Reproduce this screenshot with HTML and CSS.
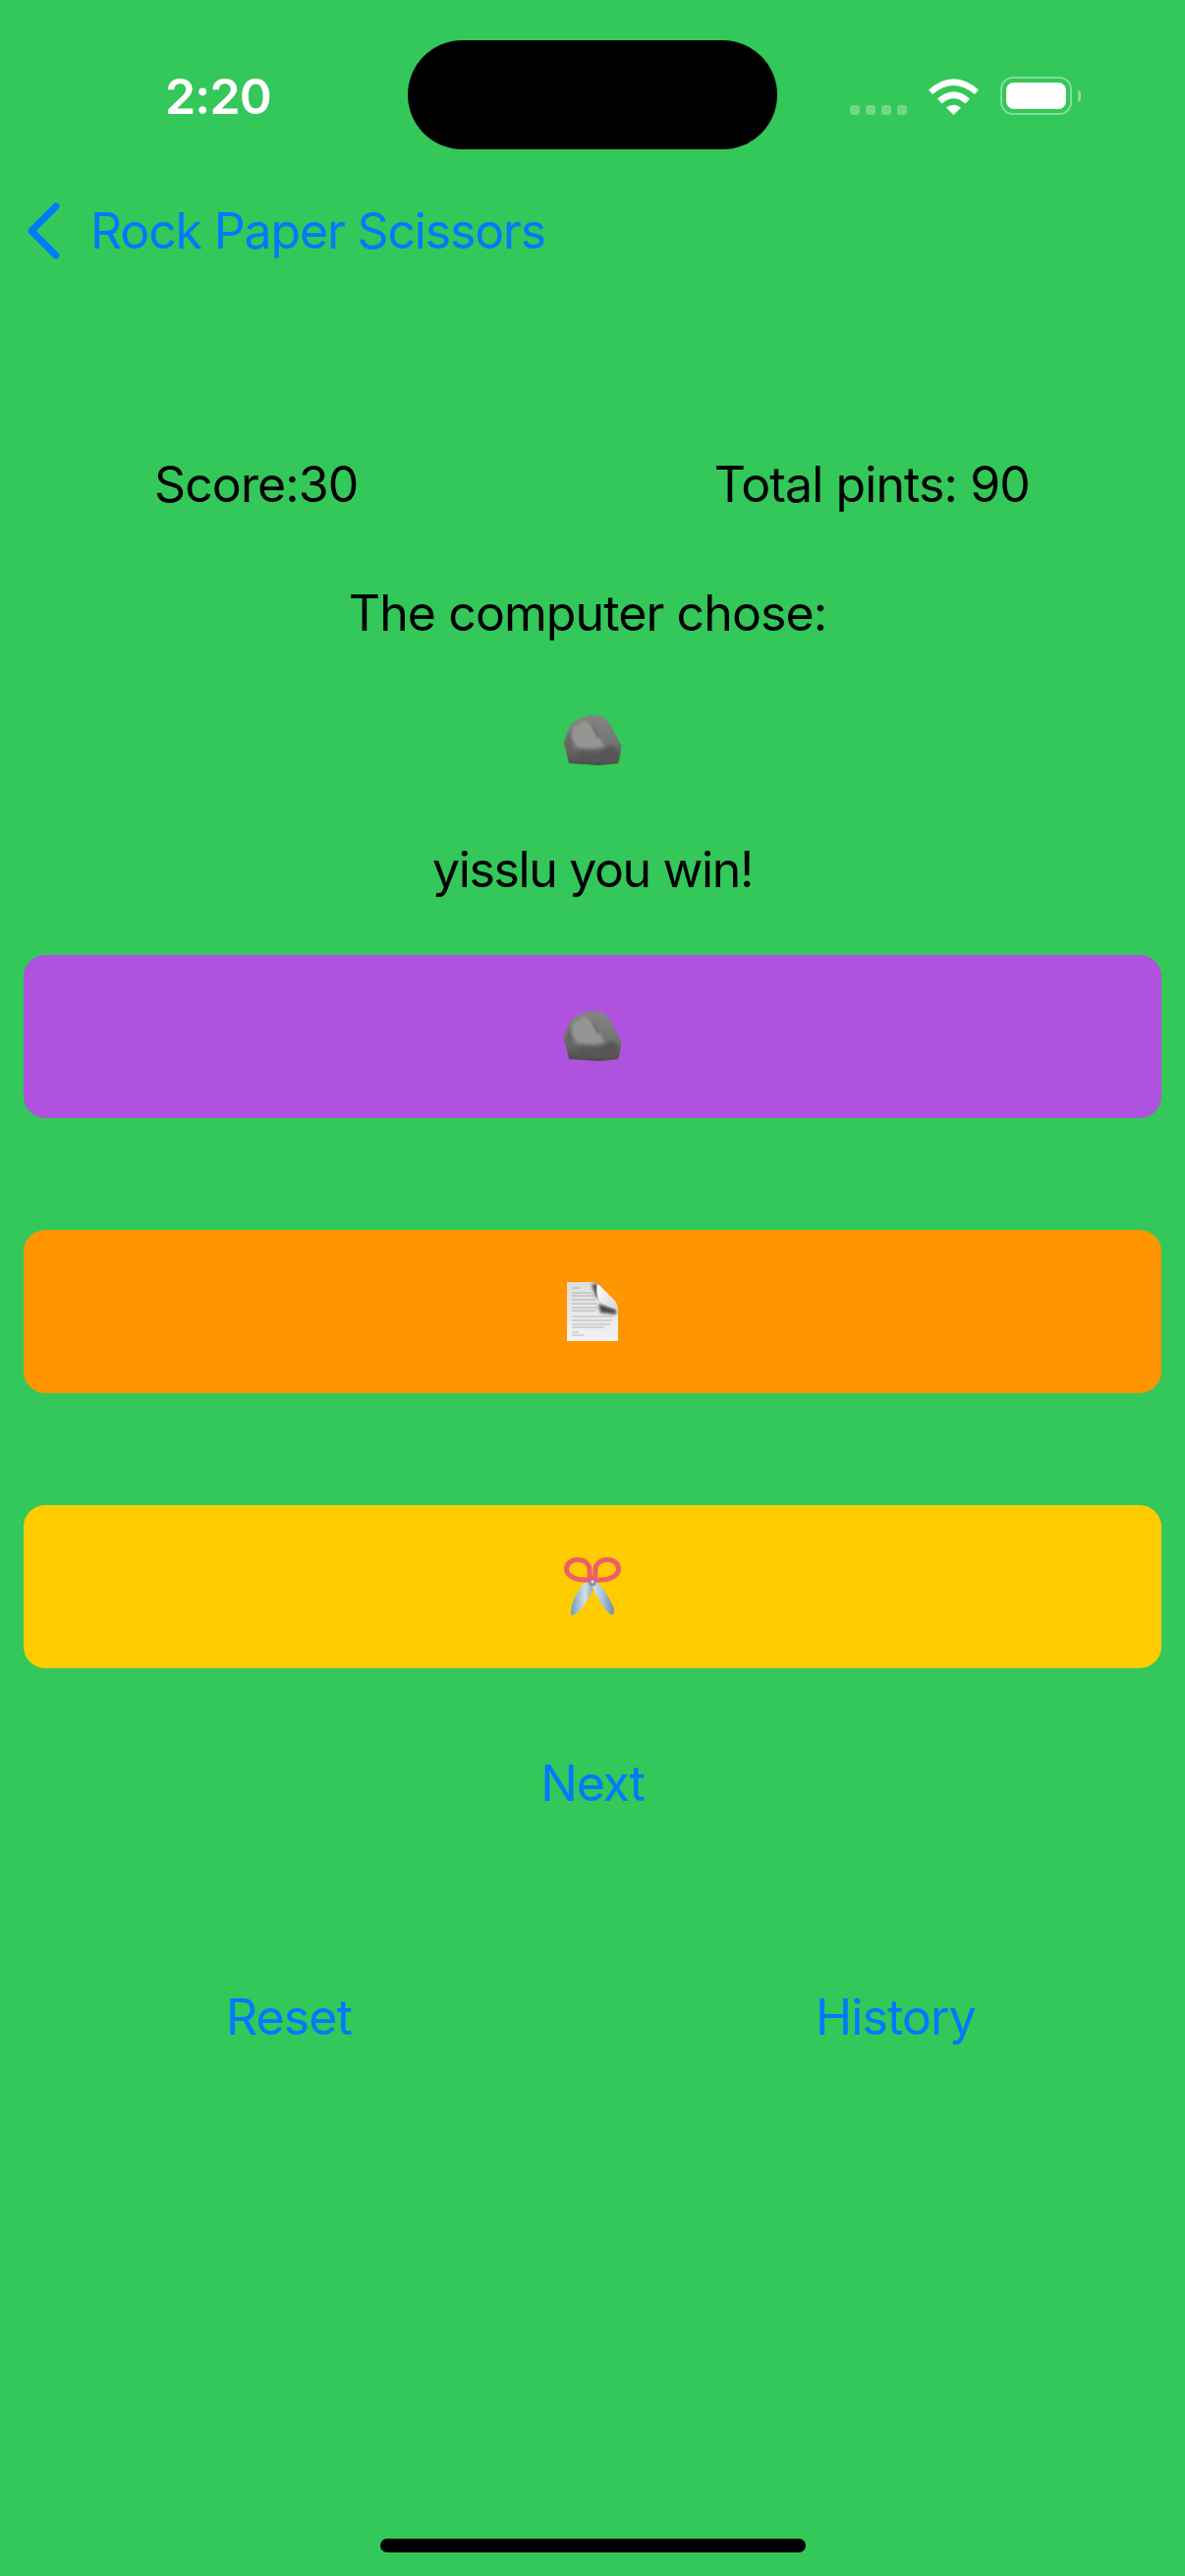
FILE: index.html
```html
<!DOCTYPE html>
<html lang="en">
<head>
    <meta charset="UTF-8">
    <meta name="viewport" content="width=device-width, initial-scale=1.0">
    <title>Rock Paper Scissors</title>
    <link rel="stylesheet" href="styles.css">
</head>
<body>
    <svg class="defs" width="0" height="0" aria-hidden="true">
        <defs>
            <filter id="soft" x="-20%" y="-20%" width="140%" height="140%">
                <feGaussianBlur stdDeviation="1.500"/>
            </filter>
            <filter id="tiny" x="-5%" y="-5%" width="110%" height="110%">
                <feGaussianBlur stdDeviation="0.600"/>
            </filter>
            <linearGradient id="rockBase" x1="0" y1="0" x2="0" y2="1">
                <stop offset="0" stop-color="#858583"/>
                <stop offset="0.55" stop-color="#747472"/>
                <stop offset="1" stop-color="#4b4b49"/>
            </linearGradient>
            <linearGradient id="paperBody" x1="0" y1="0" x2="0" y2="1">
                <stop offset="0" stop-color="#dedede"/>
                <stop offset="1" stop-color="#f2f2f2"/>
            </linearGradient>
            <linearGradient id="paperFold" x1="0" y1="0" x2="1" y2="1">
                <stop offset="0" stop-color="#ffffff"/>
                <stop offset="1" stop-color="#d6d6d6"/>
            </linearGradient>
            <linearGradient id="bladeLeft" x1="0" y1="0" x2="1" y2="0">
                <stop offset="0" stop-color="#6f9cc2"/>
                <stop offset="0.6" stop-color="#d3dfe4"/>
                <stop offset="1" stop-color="#7f9fb8"/>
            </linearGradient>
            <linearGradient id="bladeRight" x1="0" y1="0" x2="1" y2="0">
                <stop offset="0" stop-color="#dfe5e6"/>
                <stop offset="0.5" stop-color="#a9c1d4"/>
                <stop offset="1" stop-color="#6a90b2"/>
            </linearGradient>
            <symbol id="rock" viewBox="0 0 60 54">
                <path d="M18 4 L28 0.500 L40 2 L48 10 L54 22 L59.500 32 L58 43 L56 50 L37 52 L6 50 L3 37 L0.500 28 L8 10 Z" fill="url(#rockBase)"/>
                <g filter="url(#soft)">
                    <path d="M10 13 L22 7 L30 12 L38 24 L42 33 L32 35 L14 34 L9 24 Z" fill="#959593"/>
                    <path d="M28 9 L33 15 L38 25 L35 24 L30 15 Z" fill="#646462"/>
                    <path d="M14 38 L36 39 L50 31 L56 38 L54 48 L34 49 L16 46 Z" fill="#565654"/>
                    <path d="M2 30 L7 18 L9 28 L7 42 Z" fill="#636361"/>
                </g>
            </symbol>
            <symbol id="paper" viewBox="0 0 52 60">
                <path d="M0 0 H25 Q29 0 33 3 L49 19 Q52 23 52 28 V60 H0 Z" fill="url(#paperBody)"/>
                <g stroke="#8a8a8a" stroke-width="1" filter="url(#tiny)" opacity="0.55">
                    <path d="M5 6 H13"/>
                    <path d="M5 11 H25"/>
                    <path d="M5 14 H27"/>
                    <path d="M5 18 H28"/>
                    <path d="M5 22 H30"/>
                    <path d="M5 26 H31"/>
                    <path d="M5 29 H30"/>
                    <path d="M5 35 H46"/>
                    <path d="M5 39 H46"/>
                    <path d="M5 43 H44"/>
                    <path d="M5 46 H38"/>
                    <path d="M5 51 H12"/>
                    <path d="M5 54 H18"/>
                </g>
                <g filter="url(#soft)">
                    <path d="M25 2 L31 2 L32 18 L29 14 Z" fill="#4a4a4a"/>
                    <path d="M32 22 L50 28 L50 33 L34 31 Z" fill="#4a4a4a"/>
                </g>
                <path d="M31 2 Q29 12 33 19 Q40 25 51 27 Q51 22 48 19 L35 6 Q33 3 31 2 Z" fill="url(#paperFold)"/>
            </symbol>
            <symbol id="scissors" viewBox="0 0 58 60">
                <path d="M28 24 Q22 24 18 29 Q8 43 7 55 Q7 60 9 59 Q14 57 20 50 Q27 40 31 29 Z" fill="url(#bladeLeft)"/>
                <path d="M28 28 Q33 42 43 54 Q48 60 50 58 Q52 54 49 48 Q43 35 35 27 Q32 24 30 24 Z" fill="url(#bladeRight)"/>
                <g fill="none" stroke="#ee5d68" stroke-width="5">
                    <path d="M27.500 24 Q25.500 19 26 13 C26 6 20 2.500 13.500 2.500 C7 2.500 2.500 7 2.500 12 C2.500 19 12 23 20 23 Q24 23 27.500 24 Z"/>
                    <path d="M30.500 24 Q32.500 19 32 13 C32 6 38 2.500 44.500 2.500 C51 2.500 55.500 7 55.500 12 C55.500 19 46 23 38 23 Q34 23 30.500 24 Z"/>
                </g>
                <circle cx="29" cy="26" r="3.500" fill="#8b9095"/>
                <circle cx="29" cy="25" r="1.500" fill="#e4e6e6"/>
            </symbol>
        </defs>
    </svg>

    <div class="island"></div>

    <header class="status-bar">
        <span class="time">2:20</span>
        <div class="status-icons">
            <div class="signal"><i></i><i></i><i></i><i></i></div>
            <svg class="wifi" width="51" height="37" viewBox="0 0 51 37">
                <path d="M0 11.500 Q25.500 -11 51 11.500 L47 16 Q25.500 -2 4 16 Z" fill="#fff"/>
                <path d="M9 20.500 Q25.500 6 42 20.500 L37.500 25.500 Q25.500 15 13.500 25.500 Z" fill="#fff"/>
                <path d="M18 29.500 Q25.500 24 33 29.500 L25.500 37 Z" fill="#fff"/>
            </svg>
            <div class="battery"><div class="battery-fill"></div></div>
            <div class="battery-cap"></div>
        </div>
    </header>

    <nav class="nav-bar">
        <svg class="chevron" width="36" height="58" viewBox="0 0 36 58">
            <path d="M31 4 L6 29 L31 54" fill="none" stroke="#007aff" stroke-width="7" stroke-linecap="round" stroke-linejoin="round"/>
        </svg>
        <a class="nav-title">Rock Paper Scissors</a>
    </nav>

    <main class="game">
        <div class="score-row">
            <p>Score:30</p>
            <p>Total pints: 90</p>
        </div>
        <p class="prompt">The computer chose:</p>
        <div class="computer-pick">
            <svg class="pick" width="60" height="54"><use href="#rock"/></svg>
        </div>
        <p class="result">yisslu you win!</p>

        <div class="choices">
            <button class="choice choice-rock"><svg width="60" height="54"><use href="#rock"/></svg></button>
            <button class="choice choice-paper"><svg width="52" height="60"><use href="#paper"/></svg></button>
            <button class="choice choice-scissors"><svg width="58" height="60"><use href="#scissors"/></svg></button>
        </div>

        <a class="link next">Next</a>

        <div class="bottom-row">
            <a class="link">Reset</a>
            <a class="link">History</a>
        </div>
    </main>

    <div class="home-indicator"></div>
</body>
</html>
```

FILE: styles.css
```css
/* General */
body {
    margin: 0;
    width: 1206px;
    height: 2622px;
    position: relative;
    overflow: hidden;
    background: #34c759;
    color: #000;
    font-family: Inter, "Liberation Sans", Arial, sans-serif;
    font-size: 50px;
    line-height: 60px;
    letter-spacing: -0.9px;
}

p {
    margin: 0;
}

.defs {
    position: absolute;
}

/* Status bar */
.island {
    position: absolute;
    left: 415px;
    top: 41px;
    width: 376px;
    height: 111px;
    border-radius: 56px;
    background: #000;
}

.status-bar {
    height: 160px;
    display: flex;
    justify-content: space-between;
    align-items: flex-start;
    box-sizing: border-box;
    padding: 68px 106px 0 168px;
}

.time {
    color: #fff;
    font-size: 50px;
    font-weight: 600;
    letter-spacing: -0.8px;
}

.status-icons {
    display: flex;
    align-items: flex-end;
    margin-top: 11px;
    height: 38px;
}

.signal {
    display: flex;
    gap: 6px;
    margin-right: 22px;
}

.signal i {
    width: 10px;
    height: 10px;
    border-radius: 3px;
    background: rgba(255, 255, 255, 0.3);
}

.wifi {
    margin-right: 22px;
}

.battery {
    width: 73px;
    height: 39px;
    box-sizing: border-box;
    padding: 4px;
    border: 2px solid rgba(255, 255, 255, 0.4);
    border-radius: 13px;
}

.battery-fill {
    height: 100%;
    background: #fff;
    border-radius: 8px;
}

.battery-cap {
    width: 3px;
    height: 12px;
    margin: 0 0 13px 6px;
    border-radius: 0 4px 4px 0;
    background: rgba(255, 255, 255, 0.4);
}

/* Nav bar */
.nav-bar {
    height: 150px;
    display: flex;
    align-items: center;
    gap: 30px;
    padding-left: 26px;
    color: #007aff;
}

.nav-title {
    font-size: 50px;
    letter-spacing: -1.15px;
}

/* Game */
.game {
    display: flex;
    flex-direction: column;
    align-items: center;
}

.score-row {
    align-self: stretch;
    display: flex;
    justify-content: space-between;
    margin-top: 153px;
    padding: 0 158px 0 157px;
}

.prompt {
    margin-top: 71px;
    transform: translateX(-5px);
}

.computer-pick {
    height: 60px;
    margin-top: 70px;
    display: flex;
    align-items: center;
}

.result {
    margin-top: 71px;
    letter-spacing: -1.35px;
}

/* Choice buttons */
.choices {
    align-self: stretch;
    display: flex;
    flex-direction: column;
    gap: 114px;
    margin-top: 57px;
    padding: 0 24px;
}

.choice {
    height: 166px;
    padding: 0;
    border: none;
    border-radius: 22px;
    display: flex;
    align-items: center;
    justify-content: center;
}

.choice-rock {
    background: #af52de;
}

.choice-paper {
    background: #ff9500;
}

.choice-scissors {
    background: #ffcc00;
}

/* Links */
.link {
    color: #007aff;
}

.next {
    margin-top: 87px;
    letter-spacing: -1.2px;
}

.bottom-row {
    align-self: stretch;
    display: flex;
    justify-content: space-between;
    margin-top: 178px;
    padding: 0 213px 0 230px;
}

/* Home indicator */
.home-indicator {
    position: absolute;
    left: 387px;
    top: 2584px;
    width: 433px;
    height: 14px;
    border-radius: 7px;
    background: #000;
}
```
